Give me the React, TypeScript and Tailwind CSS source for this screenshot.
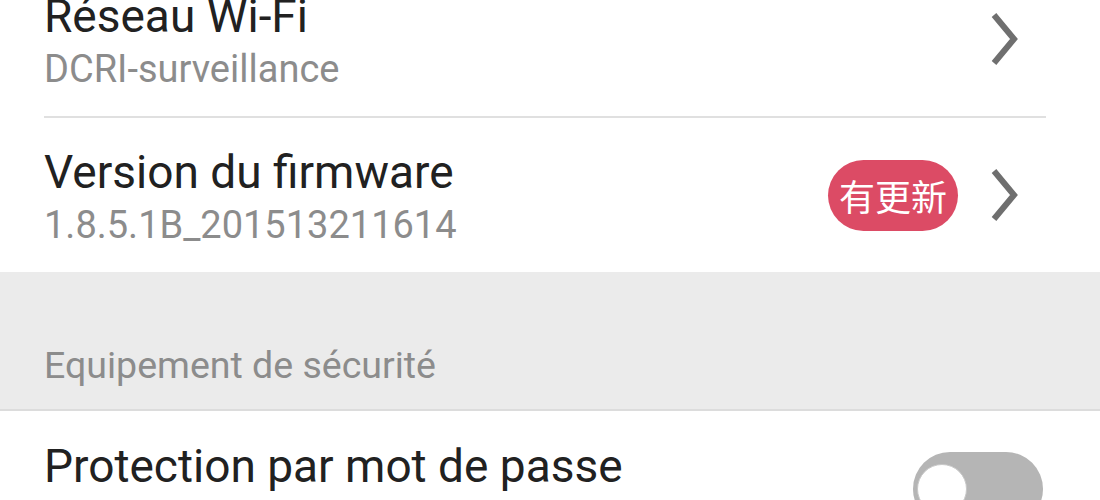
import React from 'react'

function Chevron() {
    return (
        <svg width="36" height="60" viewBox="0 0 36 60" className="shrink-0">
            <polyline points="8,6 28,30 8,54" fill="none" stroke="#6f6f6f" strokeWidth="6" strokeLinejoin="miter" />
        </svg>
    )
}

function LinkRow({ title, value, badge }: { title: string; value: string; badge?: string }) {
    return (
        <div className="flex items-center h-[154px] pl-[44px] pr-[78px]">
            <div className="flex-1 pt-[3px]">
                <div className="text-[46px] leading-[52px] text-[#212121]">{title}</div>
                <div className="mt-[5px] text-[38px] leading-[44px] text-[#8c8c8c]">{value}</div>
            </div>
            {badge && (
                <div className="mr-[28px] flex items-center justify-center w-[130px] h-[71px] rounded-full bg-[#dc4b65] text-white text-[36px] leading-none" style={{ fontFamily: '"Noto Sans CJK SC", Roboto, sans-serif' }}>
                    {badge}
                </div>
            )}
            <Chevron />
        </div>
    )
}

export default function App() {
    return (
        <div className="w-[1100px] h-[500px] overflow-hidden bg-white" style={{ fontFamily: 'Roboto, "Noto Sans CJK SC", sans-serif' }}>
            <div className="-mt-[38px]">
                <LinkRow title="Réseau Wi-Fi" value="DCRI-surveillance" />
                <div className="ml-[44px] mr-[54px] h-[2px] bg-[#e0e0e0]" />
                <LinkRow title="Version du firmware" value="1.8.5.1B_201513211614" badge="有更新" />

                <div className="bg-[#ebebeb] pt-[71px] pb-[22px] pl-[44px] border-b-2 border-[#dcdcdc]">
                    <div className="text-[37.5px] leading-[44px] text-[#8c8c8c]">Equipement de sécurité</div>
                </div>

                <div className="flex items-start h-[154px] pt-[29px] pl-[44px] pr-[57px]">
                    <div className="flex-1 text-[46px] leading-[52px] text-[#212121]">Protection par mot de passe</div>
                    <div className="relative mt-[12px] w-[130px] h-[74px] rounded-full bg-[#b5b5b5]">
                        <div className="absolute left-[4px] top-[12px] w-[50px] h-[50px] rounded-full bg-white border border-[#c8c8c8]" />
                    </div>
                </div>
            </div>
        </div>
    )
}
